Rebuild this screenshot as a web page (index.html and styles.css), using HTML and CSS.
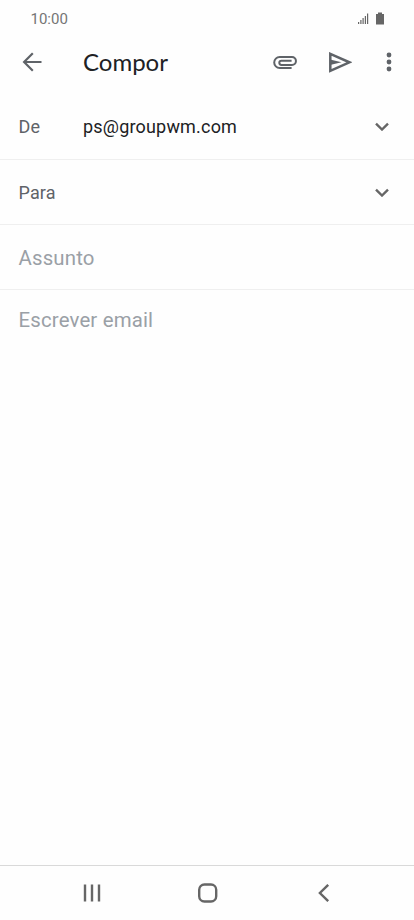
FILE: index.html
```html
<!DOCTYPE html>
<html lang="pt">
<head>
<meta charset="utf-8">
<title>Compor</title>
<link rel="stylesheet" href="styles.css">
</head>
<body>
<div class="screen">
  <div class="status">
    <span class="time">10:00</span>
    <svg width="28" height="14" viewBox="357 12 28 14" fill="#666"><path d="M358 22h1.2v2H358zM360.3 20h1.2v4h-1.2zM362.5 18h1.2v6h-1.2zM364.8 16h1.2v8h-1.2zM367 13.5h1.2V24H367zM376 14h2v-1.5h4V14h2v10.5h-8z"/></svg>
  </div>
  <header class="appbar">
    <svg class="back" width="20" height="20" viewBox="0 0 20 20"><path d="M19.5 10H2.5M10.8 1.3 2.1 10l8.7 8.7"/></svg>
    <h1>Compor</h1>
    <svg class="clip" width="24" height="14" viewBox="0 0 24 14"><path d="M18.6 13H6.7A5.5 5.5 0 0 1 6.7 2H19A3.9 3.9 0 0 1 19 9.9H8.4A2.1 2.1 0 0 1 8.4 5.7H18.6"/></svg>
    <svg class="send" width="23" height="21" viewBox="0 0 23 21"><path d="M1.3 1.8 20.4 10.3 1.3 18.9z"/><path class="fill" d="M1 7.6 12.5 10.3 1 13z"/></svg>
    <svg class="more" width="6" height="20" viewBox="0 0 6 20"><circle cx="3" cy="3" r="2.4"/><circle cx="3" cy="10" r="2.4"/><circle cx="3" cy="17" r="2.4"/></svg>
  </header>
  <main>
    <div class="row"><span class="label">De</span><span class="value">ps@groupwm.com</span><svg class="chevron" width="14" height="9" viewBox="0 0 14 9"><path d="m1 1.6 6 5.9 6-5.9"/></svg></div>
    <div class="row"><span class="label">Para</span><span class="value"></span><svg class="chevron" width="14" height="9" viewBox="0 0 14 9"><path d="m1 1.6 6 5.9 6-5.9"/></svg></div>
    <div class="row subject hint">Assunto</div>
    <div class="body hint">Escrever email</div>
  </main>
  <nav>
    <svg width="18" height="18" viewBox="0 0 18 18"><path d="M2 .5v17M9 .5v17M16 .5v17"/></svg>
    <svg class="home" width="20" height="20" viewBox="0 0 20 20"><rect x="1.2" y="1.5" width="17" height="17" rx="5.2"/></svg>
    <svg width="12" height="18" viewBox="0 0 12 18"><path d="M10.2 .8 1.9 9l8.3 8.2"/></svg>
  </nav>
</div>
</body>
</html>
```
FILE: styles.css
```css
* { box-sizing: border-box; }
body { margin: 0; background: #fefefe; font-family: Roboto, sans-serif; }
svg { display: block; flex: none; }
.screen { height: 920px; display: flex; flex-direction: column; }
.status { height: 38px; padding: 0 29px 0 30.5px; display: flex; align-items: center; justify-content: space-between; }
.time { font-size: 15px; line-height: 18px; color: #757575; }
.appbar { height: 48px; padding: 0 22.5px 0 22px; display: flex; align-items: center; color: #5f6368; }
.appbar svg { fill: none; stroke: currentColor; }
.appbar .back { stroke-width: 2.2; }
h1 { margin: 0 auto 0 41px; font: 400 24px/30px Lato, sans-serif; color: #202124; }
.appbar .clip { stroke-width: 2; margin-right: 32px; }
.appbar .send { stroke-width: 2.5; margin-right: 34px; }
.appbar .send .fill, .appbar .more { fill: currentColor; stroke: none; }
main { flex: 1; padding-top: 8px; }
.row { height: 65px; padding: 0 25px 0 18.5px; display: flex; align-items: center; border-bottom: 1px solid #efefef; }
.row:first-child { height: 66px; }
.label { width: 64.5px; font-size: 18px; letter-spacing: .15px; color: #5f6368; }
.value { flex: 1; font-size: 18px; letter-spacing: .19px; color: #202124; }
.chevron { fill: none; stroke: #666; stroke-width: 2.4; }
.hint { font-size: 20.4px; letter-spacing: .16px; color: #9aa0a6; }
.row.subject { padding-top: 2px; }
.body { padding: 18px 18.5px; line-height: 24px; }
nav { height: 55px; border-top: 1px solid #d9d9d9; padding: 0 84px 0 83px; display: flex; align-items: center; justify-content: space-between; }
nav svg { fill: none; stroke: #666; stroke-width: 2.4; }
.home { margin-right: 4px; }
```
